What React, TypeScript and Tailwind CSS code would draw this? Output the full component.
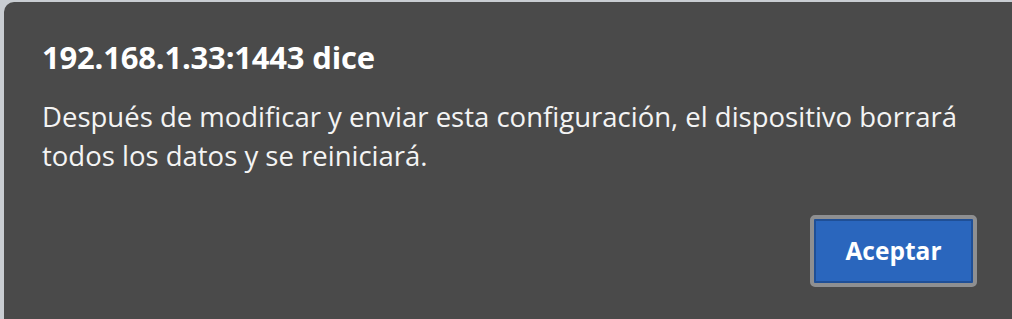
import React from 'react';

export default function App() {
    return (
        <div className="w-[1012px] h-[319px] bg-[#c9cdd2] overflow-hidden flex">
            <div
                className="ml-[4px] mt-[2px] flex-1 rounded-tl-[10px] bg-[#4a4a4a] text-white flex flex-col pl-[38px] pr-[35px]"
                style={{ fontFamily: '"Open Sans", "Noto Sans", sans-serif' }}
            >
                <h1 className="mt-[35px] text-[31px] font-bold leading-[40px] tracking-[-0.2px] whitespace-nowrap">
                    192.168.1.33:1443 dice
                </h1>
                <p className="mt-[21px] text-[27.5px] leading-[38.5px] text-[#f4f4f4] whitespace-nowrap">
                    Después de modificar y enviar esta configuración, el dispositivo borrará
                    <br />
                    todos los datos y se reiniciará.
                </p>
                <div className="flex justify-end mt-[40px]">
                    <button className="w-[167px] h-[72px] rounded-[5px] border-[4px] border-[#8e8f91] bg-[#1f4f96] p-[2px]">
                        <span className="flex h-full w-full items-center justify-center bg-[#2a66bd] text-[24.5px] font-bold text-white">
                            Aceptar
                        </span>
                    </button>
                </div>
            </div>
        </div>
    );
}
